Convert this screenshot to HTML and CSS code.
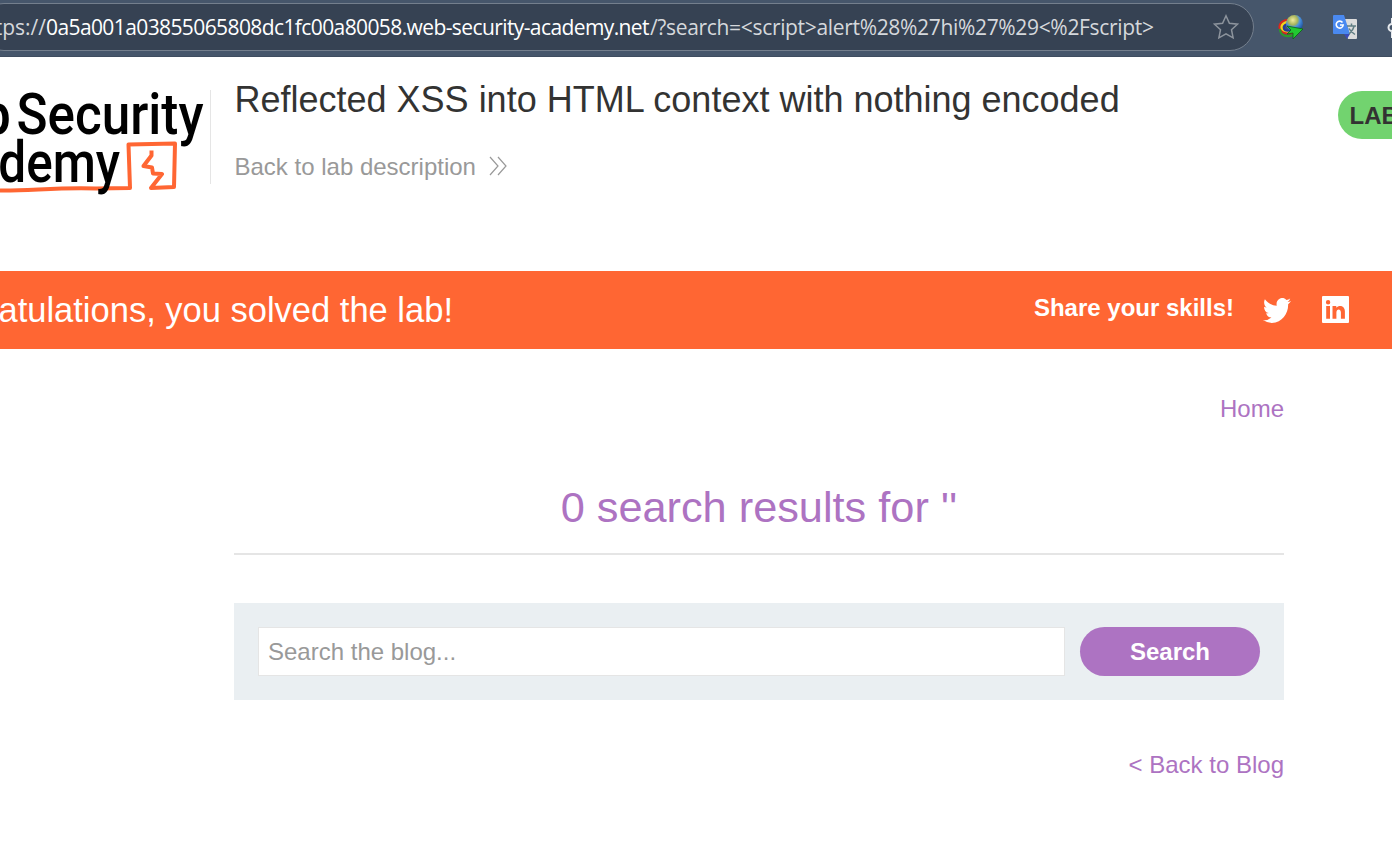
FILE: index.html
```
<!DOCTYPE html>
<html lang="en">
<head>
<meta charset="utf-8">
<title>Reflected XSS into HTML context with nothing encoded</title>
<link rel="stylesheet" href="styles.css">
</head>
<body>
<div class="toolbar">
  <div class="address">
    <div class="url"><span class="scheme">https://</span><span class="host">0a5a001a03855065808dc1fc00a80058.web-security-academy.net</span><span class="path">/?search=&lt;script&gt;alert%28%27hi%27%29&lt;%2Fscript&gt;</span></div>
    <svg class="star" viewBox="0 0 26 26"><path d="M13 1.800l3.400 7.500 8.100.9-6 5.500 1.600 8.100L13 19.800l-7.100 4 1.600-8.100-6-5.500 8.100-.9z"/></svg>
  </div>
  <svg class="ext" viewBox="0 0 26 26">
    <defs><radialGradient id="globe" cx=".4" cy=".3" r=".7"><stop offset="0" stop-color="#f0ec9c"/><stop offset=".4" stop-color="#a8b45c"/><stop offset=".6" stop-color="#4a91dc"/><stop offset="1" stop-color="#1c4f9c"/></radialGradient></defs>
    <g fill="none" stroke-width="2.200"><path stroke="#d9281c" d="M12 6C5 5 0 10 2 15c2 4 7 5 13 4"/><path stroke="#f5d21b" d="M12 8C7 7 2 11 4 15c2 3 6 3 11 2"/><path stroke="#2c9b2c" d="M2 15c0 6 6 9 13 6"/><path stroke="#243c9c" d="M11 10c-4 0-6 3-5 5 1 2 4 2 8 1"/></g>
    <circle cx="16.500" cy="9.500" r="8.500" fill="url(#globe)"/>
    <path d="M9 12l16 3-10 10 0-6-6 1 4-4z" fill="#22c932" stroke="#0b5e16" stroke-width=".8"/>
  </svg>
  <svg class="ext translate" viewBox="0 0 26 26">
    <path d="M9 5h15a1 1 0 0 1 1 1v18a1 1 0 0 1-1 1h-8z" fill="#dcdcdc"/>
    <path d="M12 20h6l-3 5z" fill="#3a4bb8"/>
    <path d="M2 1h10l6 19H2a1 1 0 0 1-1-1V2a1 1 0 0 1 1-1z" fill="#4a89f0"/>
    <path d="M10.500 8.500A3.500 3.500 0 1 0 11.200 11H8" fill="none" stroke="#fff" stroke-width="1.600"/>
    <path d="M15 12h9M19.500 9.500v2.500M22 12.500c-1 4-3 5.500-5 7.500M17 14.500c1 2 3 4 6 6" fill="none" stroke="#607d83" stroke-width="1.500"/>
  </svg>
  <svg class="ext puzzle" viewBox="0 0 26 26"><path d="M6 8V5h6a3 3 0 0 1 6 0h5v18H6v-6a3.500 3.500 0 1 1 0-7z" fill="none" stroke="#e6e9ed" stroke-width="2"/></svg>
</div>

<header class="lab-header">
  <svg class="logo" viewBox="0 0 210 112">
    <g class="logo-mark"><path d="M0 106.500C28 107 60 103 96 104.500l34-.5-1.500-43.500L175 59.500l-1 43.500-23 1 11-14-9-.5-1-6-8.500-1.500 8-10.500v-5"/></g>
    <g class="logo-text">
      <text x="11" y="50" text-anchor="end" textLength="108" lengthAdjust="spacingAndGlyphs">Web</text>
      <text x="16.500" y="50" textLength="187" lengthAdjust="spacingAndGlyphs">Security</text>
      <text x="120" y="98" text-anchor="end" textLength="207" lengthAdjust="spacingAndGlyphs">Academy</text>
    </g>
  </svg>
  <div class="title-block">
    <h2>Reflected XSS into HTML context with nothing encoded</h2>
    <a class="back-lab">Back to lab description<svg viewBox="0 0 18 20"><path d="M1 1l8 9-8 9M9 1l8 9-8 9"/></svg></a>
  </div>
  <div class="status">LAB</div>
</header>

<section class="banner">
  <h4>Congratulations, you solved the lab!</h4>
  <div class="share">
    <span>Share your skills!</span>
    <svg class="twitter" viewBox="0 2.200 24 19.600" preserveAspectRatio="none"><path d="M23.953 4.570a10 10 0 0 1-2.825.775 4.958 4.958 0 0 0 2.163-2.723c-.951.555-2.005.959-3.127 1.184a4.920 4.920 0 0 0-8.384 4.482C7.690 8.095 4.067 6.130 1.640 3.162a4.822 4.822 0 0 0-.666 2.475c0 1.710.870 3.213 2.188 4.096a4.904 4.904 0 0 1-2.228-.616v.060a4.923 4.923 0 0 0 3.946 4.827 4.996 4.996 0 0 1-2.212.085 4.936 4.936 0 0 0 4.604 3.417 9.867 9.867 0 0 1-6.102 2.105c-.390 0-.779-.023-1.170-.067a13.995 13.995 0 0 0 7.557 2.209c9.053 0 13.998-7.496 13.998-13.985 0-.210 0-.420-.015-.630A9.935 9.935 0 0 0 24 4.590z"/></svg>
    <svg class="linkedin" viewBox="0 0 27 27"><path fill-rule="evenodd" d="M1 0h25a1 1 0 0 1 1 1v25a1 1 0 0 1-1 1H1a1 1 0 0 1-1-1V1a1 1 0 0 1 1-1zM4.200 10v12.800h3.800V10zM6.100 4a2.200 2.200 0 1 0 0 4.400A2.200 2.200 0 0 0 6.100 4zM10.500 10v12.800h3.900v-6.300c0-4 4.500-4 4.500 0v6.300h4v-7.300c0-6-6-7-8.600-3.700V10z"/></svg>
  </div>
</section>

<main class="content">
  <nav><a>Home</a></nav>
  <h1>0 search results for ''</h1>
  <form class="search">
    <input type="text" placeholder="Search the blog...">
    <button type="button">Search</button>
  </form>
  <div class="back-blog"><a>&lt; Back to Blog</a></div>
</main>
</body>
</html>
```
FILE: styles.css
```
* { box-sizing: border-box; }
body {
  margin: 0;
  height: 841px;
  overflow: hidden;
  background: #fff;
  color: #333332;
  font: 24px/36px "Liberation Sans", Arial, sans-serif;
}
h1, h2, h4 { margin: 0; font-weight: 400; }
svg { flex: none; }

.toolbar {
  display: flex;
  align-items: center;
  height: 57px;
  padding-bottom: 3px;
  background: #46566b;
  border-bottom: 1px solid #3f4d60;
  overflow: hidden;
}
.address {
  display: flex;
  flex: none;
  align-items: center;
  justify-content: space-between;
  width: 1274px;
  height: 48px;
  margin-left: -20px;
  padding-right: 14px;
  background: #364253;
  border: 1px solid #747f8d;
  border-radius: 24px;
}
.url {
  display: flex;
  padding-top: 1px;
  white-space: nowrap;
  font: 21px/30px "Open Sans", "Noto Sans", sans-serif;
  color: #d5d8dc;
}
.scheme { display: flex; justify-content: flex-end; width: 65px; }
.host { width: 604px; color: #fff; letter-spacing: -0.600px; }
.path { letter-spacing: -0.330px; }
.star { width: 26px; height: 26px; fill: none; stroke: #8d949d; stroke-width: 1.500; }
.ext { width: 26px; height: 26px; margin-left: 24px; }
.translate { margin-left: 28px; }
.puzzle { margin-left: 28px; }

.lab-header { display: flex; height: 214px; padding-top: 27px; overflow: hidden; }
.logo { width: 210px; height: 112px; }
.logo-text { font: 500 57px Roboto, sans-serif; fill: #000; }
.logo-mark { fill: none; stroke: #f63; stroke-width: 4; stroke-linejoin: round; }
.title-block { flex: none; width: 1128px; height: 94px; margin-top: 6px; padding-left: 23.500px; border-left: 1px solid #e5e5e5; }
.title-block h2 { margin-top: -12px; font-size: 36px; line-height: 44px; white-space: nowrap; }
.back-lab { display: flex; align-items: center; gap: 13px; margin-top: 27px; color: #999; }
.back-lab svg { width: 18px; height: 20px; margin-top: -2px; fill: none; stroke: #999; stroke-width: 1.200; }
.status {
  flex: none;
  width: 180px;
  height: 48px;
  margin-top: 7px;
  padding-left: 11.500px;
  background: #72d36f;
  border-radius: 24px;
  font-weight: 700;
  line-height: 49px;
}

.banner {
  display: flex;
  align-items: center;
  justify-content: space-between;
  height: 78px;
  padding-right: 43px;
  background: #f63;
  color: #fff;
  overflow: hidden;
}
.banner h4 { display: flex; justify-content: flex-end; width: 453px; font-size: 34.500px; white-space: nowrap; }
.share { display: flex; align-items: center; font-weight: 700; }
.share span { padding-bottom: 4px; }
.share svg { fill: #fff; }
.twitter { width: 28px; height: 25px; margin-left: 29px; }
.linkedin { width: 27px; height: 27px; margin: 0 0 2px 31px; }

.content { width: 1050px; margin-left: 234px; color: #ad73c2; }
.content nav { padding-top: 42px; text-align: right; }
.content h1 {
  margin-top: 48px;
  height: 80px;
  border-bottom: 2px solid #e5e5e5;
  font-size: 43.300px;
  line-height: 64px;
  text-align: center;
}
.search { display: flex; gap: 15px; height: 97px; margin: 48px 0 0; padding: 24px; background: #eaeff2; }
.search input {
  flex: 1;
  min-width: 0;
  height: 49px;
  padding: 0 9px;
  border: 1px solid #e5e5e5;
  background: #fff;
  font: 24px "Liberation Sans", Arial, sans-serif;
}
.search input::placeholder { color: #999; opacity: 1; }
.search button {
  width: 180px;
  height: 49px;
  border: 0;
  border-radius: 25px;
  background: #ad73c2;
  color: #fff;
  font: 700 24px "Liberation Sans", Arial, sans-serif;
}
.back-blog { margin-top: 47px; text-align: right; }
```
